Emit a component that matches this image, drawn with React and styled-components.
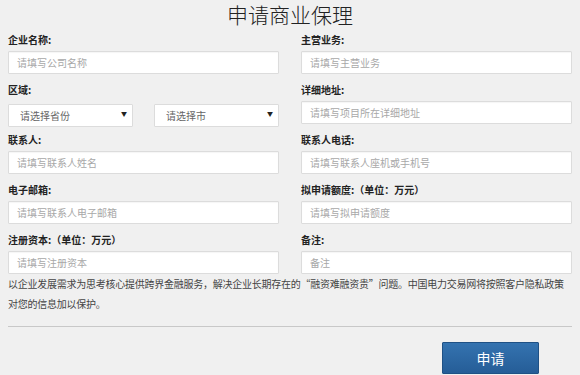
import React from "react";
import styled, { createGlobalStyle } from "styled-components";

const GlobalStyle = createGlobalStyle`
  html, body { margin: 0; padding: 0; background: #f0f0f0; }
  body { font-family: "Noto Sans CJK SC", "Noto Sans", sans-serif; }
  * { box-sizing: border-box; }
`;

const Page = styled.div`
  width: 580px;
  height: 375px;
  padding: 0 8px;
  background: #f0f0f0;
  overflow: hidden;
`;

const Title = styled.h1`
  margin: 0 0 4px;
  height: 28px;
  line-height: 28px;
  text-align: center;
  font-size: 21px;
  font-weight: 300;
  color: #222;
`;

const Grid = styled.div`
  display: grid;
  grid-template-columns: 271px 271px;
  column-gap: 22px;
  row-gap: 8px;
`;

const Field = styled.div`
  display: flex;
  flex-direction: column;
`;

const Label = styled.label`
  height: 16px;
  line-height: 16px;
  margin-bottom: 3px;
  font-size: 10px;
  font-weight: 700;
  color: #222;
`;

const Input = styled.input`
  height: 23px;
  width: 100%;
  padding: 0 8px;
  border: 1px solid #dcdcdc;
  border-radius: 1px;
  background: #fff;
  box-shadow: inset 0 1px 1px rgba(0, 0, 0, 0.04);
  font-family: inherit;
  font-size: 10px;
  color: #333;
  outline: none;
  &::placeholder { color: #a8a8a8; }
`;

const SelectRow = styled.div`
  display: grid;
  grid-template-columns: 1fr 1fr;
  column-gap: 21px;
`;

const SelectWrap = styled.div`
  position: relative;
  height: 23px;
`;

const Select = styled.select`
  appearance: none;
  width: 100%;
  height: 23px;
  padding: 0 0 0 11px;
  border: 1px solid #dcdcdc;
  border-radius: 1px;
  background: #fff;
  font-family: inherit;
  font-size: 10px;
  color: #666;
  outline: none;
`;

const Arrow = styled.span`
  position: absolute;
  right: 6px;
  top: 50%;
  transform: translateY(-50%);
  font-size: 6px;
  color: #222;
  pointer-events: none;
`;

const Note = styled.p`
  margin: 0;
  font-size: 10px;
  line-height: 20px;
  letter-spacing: -0.25px;
  color: #444;
`;

const Divider = styled.hr`
  margin: 12px 0 0;
  border: 0;
  border-top: 1px solid #c8c8c8;
`;

const Actions = styled.div`
  display: flex;
  justify-content: flex-end;
  padding: 15px 33px 0 0;
`;

const Button = styled.button`
  width: 97px;
  height: 32px;
  border: 1px solid #1f5185;
  border-radius: 1px;
  background: linear-gradient(#3473b0, #255d97);
  color: #fff;
  font-family: inherit;
  font-size: 14px;
  cursor: pointer;
`;

const TextField = ({ label, placeholder }) => (
  <Field>
    <Label>{label}</Label>
    <Input placeholder={placeholder} />
  </Field>
);

export default function App() {
  return (
    <Page>
      <GlobalStyle />
      <Title>申请商业保理</Title>
      <Grid>
        <TextField label="企业名称:" placeholder="请填写公司名称" />
        <TextField label="主营业务:" placeholder="请填写主营业务" />
        <Field>
          <Label>区域:</Label>
          <SelectRow>
            <SelectWrap>
              <Select defaultValue="">
                <option value="">请选择省份</option>
              </Select>
              <Arrow>▼</Arrow>
            </SelectWrap>
            <SelectWrap>
              <Select defaultValue="">
                <option value="">请选择市</option>
              </Select>
              <Arrow>▼</Arrow>
            </SelectWrap>
          </SelectRow>
        </Field>
        <TextField label="详细地址:" placeholder="请填写项目所在详细地址" />
        <TextField label="联系人:" placeholder="请填写联系人姓名" />
        <TextField label="联系人电话:" placeholder="请填写联系人座机或手机号" />
        <TextField label="电子邮箱:" placeholder="请填写联系人电子邮箱" />
        <TextField label="拟申请额度:（单位：万元）" placeholder="请填写拟申请额度" />
        <TextField label="注册资本:（单位：万元）" placeholder="请填写注册资本" />
        <TextField label="备注:" placeholder="备注" />
      </Grid>
      <Note>
        以企业发展需求为思考核心提供跨界金融服务，解决企业长期存在的“融资难融资贵”问题。中国电力交易网将按照客户隐私政策
        <br />
        对您的信息加以保护。
      </Note>
      <Divider />
      <Actions>
        <Button type="button">申请</Button>
      </Actions>
    </Page>
  );
}
